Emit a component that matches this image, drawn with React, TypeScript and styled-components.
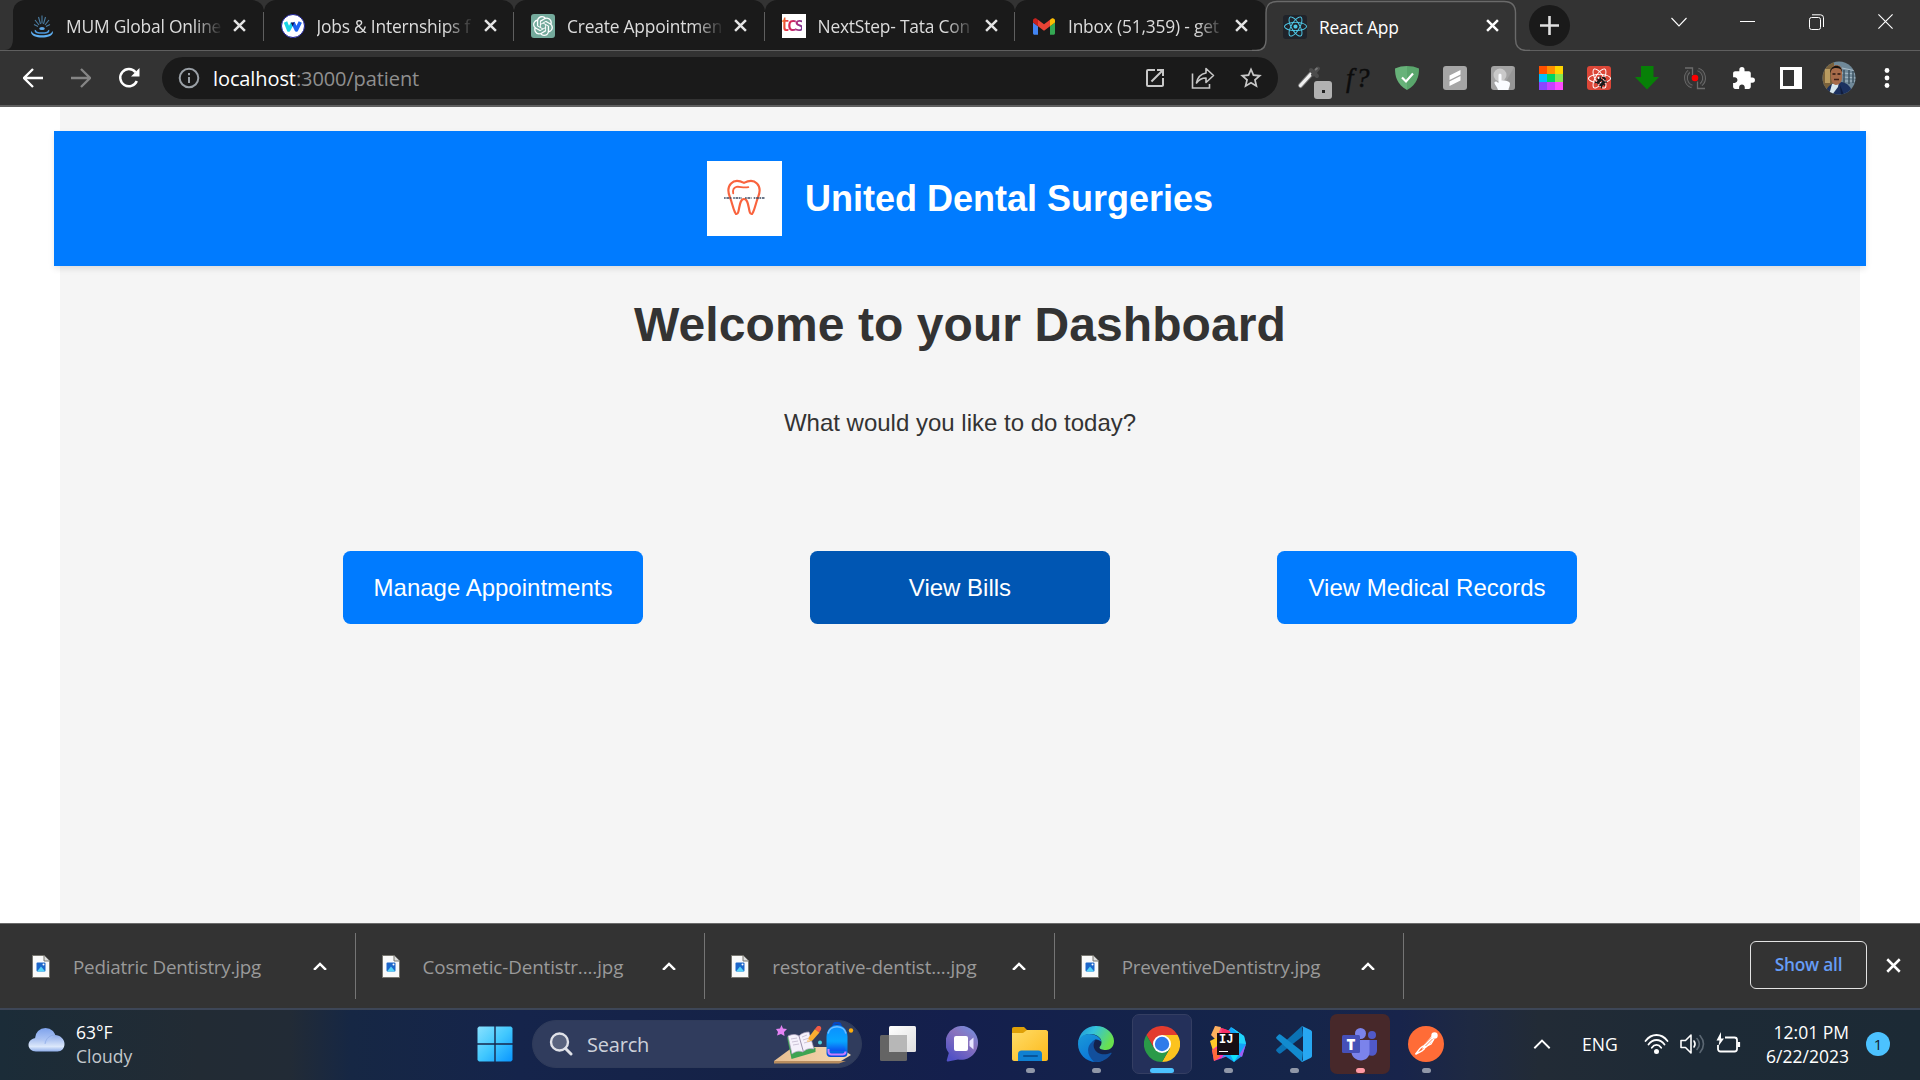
import React from 'react';
import styled, { createGlobalStyle, css } from 'styled-components';
import { SiOpenai } from 'react-icons/si';
import { FaReact, FaBug } from 'react-icons/fa';
import { MdExtension, MdOpenInNew, MdStarBorder } from 'react-icons/md';

const ui = `"Open Sans", "Noto Sans", sans-serif`;
const arial = `"Liberation Sans", Arial, sans-serif`;

const Global = createGlobalStyle`
  * { box-sizing: border-box; }
  html, body { margin: 0; padding: 0; overflow: hidden; }
  body { font-family: ${ui}; background: #fff; }
  svg { display: block; flex: none; }
  button { font: inherit; border: 0; background: none; padding: 0; margin: 0; color: inherit; }
`;

const Screen = styled.div`
  width: 1920px;
  height: 1080px;
  display: flex;
  flex-direction: column;
  overflow: hidden;
`;

/* ---------- Tab strip ---------- */
const TabStrip = styled.header`
  display: flex;
  height: 51px;
  background: #333;
  flex: none;
`;
const TabGroup = styled.div`
  display: flex;
  width: 1266px;
  padding-left: 13px;
  border-bottom: 1px solid #5f5f5f;
  position: relative;
`;
const tabLayout = css`
  display: flex;
  align-items: center;
  flex: none;
`;
const Tab = styled.div`
  ${tabLayout}
  position: relative;
  width: 250.5px;
  height: 50px;
  padding-left: 17px;
  background: #1a1a1a;
  border-radius: 12px 12px 0 0;
  color: #dcdcdc;
  &:not(:last-child)::after {
    content: '';
    position: absolute;
    right: 0;
    top: 12px;
    width: 1px;
    height: 29px;
    background: #5f5f5f;
  }
  &:not(:last-child)::before {
    content: '';
    position: absolute;
    right: -6px;
    bottom: 0;
    width: 12px;
    height: 38px;
    background: #1a1a1a;
  }
`;
const TabFoot = styled.svg`
  position: absolute;
  left: 1px;
  bottom: 0;
`;
const ActiveTab = styled.div`
  ${tabLayout}
  position: relative;
  width: 250px;
  height: 51px;
  color: #fff;
  padding-left: 17px;
  > * { position: relative; }
`;
const ActiveOutline = styled.svg`
  && { position: absolute; left: -14px; top: 0; }
`;
const TabIcon = styled.span`
  width: 24px;
  height: 24px;
  display: flex;
  align-items: center;
  justify-content: center;
  margin-top: 2px;
`;
const TabTitle = styled.span<{ $fade?: boolean }>`
  width: 155px;
  margin: 2px 12px 0 12px;
  font-size: 17.4px;
  line-height: 26px;
  letter-spacing: -0.2px;
  white-space: nowrap;
  ${p => p.$fade && css`mask-image: linear-gradient(90deg, #000 128px, transparent 157px);`}
`;
const StripRest = styled.div`
  flex: 1;
  display: flex;
  justify-content: space-between;
  border-bottom: 1px solid #5f5f5f;
  padding-left: 13px;
`;
const NewTab = styled.button`
  width: 41px;
  height: 41px;
  margin-top: 5px;
  border-radius: 50%;
  background: #1a1a1a;
  display: grid;
  place-items: center;
`;
const WindowControls = styled.div`
  display: flex;
`;
const WindowButton = styled.button`
  width: 69px;
  height: 43px;
  display: grid;
  place-items: center;
`;

/* ---------- Toolbar ---------- */
const Toolbar = styled.div`
  height: 56px;
  flex: none;
  display: flex;
  align-items: center;
  padding: 0 9px;
  background: #333;
  border-bottom: 2px solid #5f5f5f;
`;
const IconCell = styled.span`
  position: relative;
  width: 48px;
  height: 42px;
  flex: none;
  display: grid;
  place-items: center;
`;
const Omnibox = styled.div`
  flex: 1;
  height: 42px;
  margin: 0 9px;
  padding: 0 3px;
  border-radius: 21px;
  background: #1a1a1a;
  color: #c8c8c8;
  display: flex;
  align-items: center;
`;
const Address = styled.span`
  flex: 1;
  padding-top: 1px;
  font-size: 20px;
  line-height: 30px;
  letter-spacing: -0.1px;
  color: #8f8f8f;
  b { font-weight: 400; color: #fff; }
`;
const Badge = styled.span`
  position: absolute;
  left: 27px;
  top: 24px;
  width: 18px;
  height: 18px;
  border-radius: 3px;
  background: #b1b1b1;
  display: grid;
  place-items: center;
  &::after { content: ''; width: 3px; height: 3px; background: #222; margin-top: 3px; }
`;
const FontQuestion = styled.span`
  font: italic 27px/30px "Liberation Serif", serif;
  color: #0c0c0c;
  -webkit-text-stroke: 0.4px #0c0c0c;
  letter-spacing: 2.5px;
`;
const Tile = styled.span<{ $bg: string }>`
  position: relative;
  width: 24px;
  height: 24px;
  border-radius: 3px;
  background: ${p => p.$bg};
  display: grid;
  place-items: center;
  overflow: hidden;
`;
const BugMark = styled(FaBug)`
  position: absolute;
  right: 4px;
  bottom: 3px;
  transform: rotate(40deg);
`;
const Swatches = styled.span`
  width: 24px;
  height: 24px;
  display: grid;
  grid-template-columns: repeat(3, 1fr);
`;
const Swatch = styled.i<{ $c: string }>`
  background: ${p => p.$c};
`;

/* ---------- Page ---------- */
const Page = styled.main`
  height: 816px;
  flex: none;
  background: #fff;
  display: flex;
  justify-content: center;
  font-family: ${arial};
  color: #333;
`;
const Container = styled.div`
  width: 1800px;
  background: #f5f5f5;
  display: flex;
  flex-direction: column;
  align-items: center;
  padding-top: 24px;
`;
const Banner = styled.div`
  width: 1812px;
  height: 135px;
  flex: none;
  background: #007bff;
  box-shadow: 0 3px 6px rgba(0, 0, 0, 0.1);
  display: flex;
  align-items: center;
  justify-content: center;
  gap: 23px;
`;
const Logo = styled.div`
  width: 75px;
  height: 75px;
  background: #fff;
  display: grid;
  place-items: center;
`;
const BrandName = styled.h1`
  margin: 0;
  font-size: 36px;
  line-height: 42px;
  font-weight: 700;
  color: #fff;
`;
const Welcome = styled.h2`
  margin: 32px 0 0;
  font-size: 48px;
  line-height: 54px;
  letter-spacing: 0.08px;
  font-weight: 700;
`;
const Prompt = styled.p`
  margin: 57px 0 0;
  font-size: 24px;
  line-height: 28px;
`;
const Actions = styled.div`
  display: flex;
  gap: 167px;
  margin-top: 114px;
`;
const ActionButton = styled.button<{ $hover?: boolean }>`
  width: 300px;
  height: 73px;
  border-radius: 7.5px;
  background: ${p => (p.$hover ? '#0056b3' : '#007bff')};
  color: #fff;
  font-size: 24px;
`;

/* ---------- Downloads ---------- */
const Downloads = styled.div`
  height: 85px;
  flex: none;
  display: flex;
  background: #333;
  border-top: 1px solid #6a6a6a;
  padding: 9px 19px 0 6px;
`;
const DownloadItem = styled.div`
  width: 349.6px;
  height: 66px;
  display: flex;
  align-items: center;
  padding: 0 28px 0 26px;
  border-right: 1px solid #757575;
`;
const FileName = styled.span<{ $ls: number }>`
  flex: 1;
  padding-top: 1px;
  margin-left: 23px;
  font-size: 18.8px;
  line-height: 26px;
  letter-spacing: ${p => p.$ls}px;
  color: #9a9a9a;
  white-space: nowrap;
`;
const Spacer = styled.div`
  flex: 1;
`;
const ShowAll = styled.button`
  width: 117px;
  height: 48px;
  margin: 8px 19px 0 0;
  padding-bottom: 2px;
  border: 1px solid #e3e3e3;
  border-radius: 6px;
  color: #669df6;
  font-size: 17.3px;
  font-weight: 600;
  letter-spacing: -0.2px;
`;
const CloseShelf = styled.button`
  height: 48px;
  margin-top: 8px;
`;

/* ---------- Taskbar ---------- */
const Taskbar = styled.footer`
  height: 72px;
  flex: none;
  display: flex;
  align-items: center;
  padding-bottom: 2px;
  border-top: 2px solid #3d4657;
  background: linear-gradient(90deg, #1b2c38 0, #222b34 200px, #222b36 290px, #162744 350px, #15244b 520px, #152247 740px, #141f4d 960px, #14234a 1150px, #15254a 1300px, #18244b 1400px, #1e2942 1470px, #222b36 1540px, #1d2a36 1700px, #1c2a35 1920px);
  color: #fff;
`;
const Weather = styled.div`
  width: 462px;
  flex: none;
  padding-left: 28px;
  display: flex;
  gap: 11px;
  align-items: center;
`;
const Lines = styled.div<{ $right?: boolean }>`
  display: flex;
  flex-direction: column;
  font-size: 17.5px;
  line-height: 24px;
  text-align: ${p => (p.$right ? 'right' : 'left')};
`;
const Muted = styled.span`
  color: #c3c8cc;
`;
const TaskCell = styled.span<{ $bg?: string; $edge?: string }>`
  position: relative;
  width: 60px;
  height: 60px;
  margin: 0 3px;
  flex: none;
  display: grid;
  place-items: center;
  border-radius: 7px;
  border: 1px solid ${p => p.$edge ?? 'transparent'};
  background: ${p => p.$bg ?? 'transparent'};
`;
const Running = styled.i<{ $color?: string; $wide?: boolean }>`
  position: absolute;
  left: 50%;
  bottom: 0;
  width: ${p => (p.$wide ? 24 : 9)}px;
  height: 5px;
  margin-left: ${p => (p.$wide ? -12 : -4.5)}px;
  border-radius: 3px;
  background: ${p => p.$color ?? '#9097a8'};
`;
const SearchBox = styled.div`
  width: 330px;
  height: 48px;
  margin: 0 3px 0 4px;
  flex: none;
  border-radius: 24px;
  border: 1px solid #2f3b5a;
  background: #303c5d;
  display: flex;
  align-items: center;
  padding: 0 7px 0 16px;
`;
const SearchLabel = styled.span`
  flex: 1;
  margin-left: 14px;
  font-size: 20px;
  letter-spacing: -0.2px;
  color: #cdd1da;
`;
const Tray = styled.div`
  margin-left: auto;
  padding-right: 30px;
  display: flex;
  align-items: center;
`;
const Language = styled.span`
  width: 62px;
  margin-left: 31px;
  font-size: 17.5px;
`;
const TrayIcons = styled.div`
  display: flex;
  align-items: center;
  gap: 11px;
  width: 119px;
`;
const Clock = styled.div`
  width: 86px;
  margin-right: 17px;
  white-space: nowrap;
  display: flex;
  justify-content: flex-end;
`;
const Count = styled.span`
  width: 24px;
  height: 24px;
  border-radius: 50%;
  background: #4cc2ff;
  color: #12202e;
  font-size: 15px;
  line-height: 24px;
  text-align: center;
`;

const Cross = ({ size = 13, color = '#e4e4e4', w = 2.3 }: { size?: number; color?: string; w?: number }) => (
  <svg width={size} height={size} viewBox="0 0 12 12">
    <path d="M1 1L11 11M11 1L1 11" stroke={color} strokeWidth={w} />
  </svg>
);

const Fountain = () => (
  <svg width="24" height="26" viewBox="0 0 24 26" fill="none">
    <g stroke="#4b7ea3" strokeWidth="1.1">
      <path d="M12 2.500v8M8.500 4l2 7M15.500 4l-2 7M5 7l4 5M19 7l-4 5M4 11.500l4 2M20 11.500l-4 2" />
    </g>
    <ellipse cx="12" cy="15.500" rx="2.800" ry="1.500" fill="#5fa8e6" />
    <path d="M5.500 17c-1 2.500 3 3 6.500 3s7.500-.500 6.500-3" stroke="#4d9be0" strokeWidth="1.500" />
    <path d="M1.500 18c-2 4 4 6.500 10.500 6.500S24.500 22 22.500 18c-1 3-5 4.200-10.500 4.200S2.500 21 1.500 18z" fill="#5fb0f2" />
  </svg>
);

const BlueW = () => (
  <svg width="24" height="24" viewBox="0 0 24 24">
    <circle cx="12" cy="12" r="11.500" fill="#fff" stroke="#1b1f9c" />
    <path d="M4.500 8l3.200 8 3.800-7" fill="none" stroke="#19d3e6" strokeWidth="3.600" strokeLinejoin="round" />
    <path d="M12 8.500l3.400 7.500L19.300 8" fill="none" stroke="#1a62f0" strokeWidth="3.600" strokeLinejoin="round" />
    <path d="M9.800 8.500h3.500l-1.600 4z" fill="#10145a" />
  </svg>
);

const OpenAiTile = styled.span`
  width: 24px;
  height: 24px;
  border-radius: 3px;
  background: #74aa9c;
  color: #fff;
  display: grid;
  place-items: center;
`;
const TcsTile = styled.span`
  width: 24px;
  height: 24px;
  background: #fff;
  font: 600 19px/21px "Open Sans", sans-serif;
  letter-spacing: -1.8px;
  span {
    background: linear-gradient(100deg, #f58220 5%, #e4274b 35%, #b62a78 65%, #6a3a98);
    background-clip: text;
    -webkit-background-clip: text;
    color: transparent;
  }
`;

const Gmail = () => (
  <svg width="22" height="17" viewBox="52 42 88 66">
    <path fill="#4285f4" d="M58 108h14V74L52 59v43c0 3.320 2.690 6 6 6" />
    <path fill="#34a853" d="M120 108h14c3.320 0 6-2.690 6-6V59l-20 15" />
    <path fill="#fbbc04" d="M120 48v26l20-15v-8c0-7.420-8.470-11.650-14.400-7.200" />
    <path fill="#ea4335" d="M72 74V48l24 18 24-18v26L96 92" />
    <path fill="#c5221f" d="M52 51v8l20 15V48l-5.600-4.200c-5.940-4.450-14.400-.220-14.400 7.200" />
  </svg>
);

const tabs = [
  { title: 'MUM Global Online', icon: <Fountain /> },
  { title: 'Jobs & Internships f', icon: <BlueW /> },
  { title: 'Create Appointmen', icon: <OpenAiTile><SiOpenai size={20} /></OpenAiTile> },
  { title: 'NextStep- Tata Con', icon: <TcsTile><span>tcs</span></TcsTile> },
  { title: 'Inbox (51,359) - get', icon: <Gmail /> },
];

const Tooth = () => (
  <svg width="46" height="41" viewBox="2 0 42 38" fill="none">
    <g stroke="#f9633e" strokeWidth="2" strokeLinejoin="round" strokeLinecap="round">
      <path d="M23 4.500c-5-2.500-9-2.500-12 .500-3 3-3 8-1 13 2 5 2.500 9 4.500 13.500 1 2.500 2.500 2.500 3.200 0C19 27 19 19.500 23 19.500s4 7.500 5.300 12c.7 2.500 2.200 2.500 3.200 0 2-4.500 2.500-8.500 4.500-13.500 2-5 2-10-1-13-3-3-7-3-12-.500z" />
      <path d="M27 8.500c-5 1-8-1-11-.300-2.500.600-3.500 3-3 6" strokeWidth="1.700" />
    </g>
    <path d="M4.500 18.500h7M13 18.500h8M24 18.500h6M32 18.500h10" stroke="#3a4a63" strokeWidth="1.300" strokeDasharray="1.500 .7 2.500 .6" />
  </svg>
);

const ReactTile = () => (
  <Tile $bg="#20232a"><FaReact size={23} color="#4fc9e8" /></Tile>
);

const Eyedropper = () => (
  <svg width="30" height="26" viewBox="0 0 30 26">
    <path d="M4.500 20.500L15 9" stroke="#777" strokeWidth="5" strokeLinecap="round" />
    <path d="M4.500 20.500L15 9" stroke="#f0f0f0" strokeWidth="3.200" strokeLinecap="round" />
    <path d="M15 5l6 6M17 9.500l5-6" stroke="#4c4c4c" strokeWidth="4" strokeLinecap="round" />
    <path d="M19 5l2.500-2" stroke="#777" strokeWidth="2" />
  </svg>
);
const Shield = () => (
  <svg width="24" height="24" viewBox="0 0 24 24">
    <path d="M12 0C8 0 3.500.800 0 2.500 0 10 1.500 18 12 24z" fill="#67b279" />
    <path d="M12 0c4 0 8.500.800 12 2.500C24 10 22.500 18 12 24z" fill="#5aa66c" />
    <path d="M7 11.500l4 4 7-8" fill="none" stroke="#fff" strokeWidth="2.200" />
  </svg>
);
const Scribe = () => (
  <svg width="24" height="24" viewBox="0 0 24 24">
    <path d="M6.500 9.500l11-5.500v4.500l-11 5.500zM6.500 15.500l11-5.500v4.500l-11 5.500z" fill="#fff" />
  </svg>
);
const Touch = () => (
  <svg width="24" height="24" viewBox="0 0 24 24">
    <path d="M24 0v24H10z" fill="#8a8a8a" opacity=".5" />
    <circle cx="9" cy="9" r="6.500" fill="#c9c9c9" />
    <path d="M7.500 9c0-1.800 3-1.800 3 0v5.500c3 0 8.500.500 8.500 3 0 3-1.500 4.500-1.500 6.500H7C6.500 21 3 18.500 3.500 16c1-1 2.500-.500 4 1z" fill="#fafcff" />
  </svg>
);
const DownArrow = () => (
  <svg width="24" height="24" viewBox="0 0 24 24">
    <path d="M6 0h12.500v11H24L12 23.500 0 11h6z" fill="#078007" />
  </svg>
);
const Cycle = () => (
  <svg width="24" height="24" viewBox="0 0 24 24" fill="none">
    <g stroke="#6c6c6c" strokeWidth="3.800">
      <path d="M9 20.500A9 9 0 0 1 6 5.300" />
      <path d="M15 3.500a9 9 0 0 1 3 15.200" />
    </g>
    <g stroke="#3b3b3b" strokeWidth="2">
      <path d="M9 20.500A9 9 0 0 1 6 5.300" />
      <path d="M15 3.500a9 9 0 0 1 3 15.200" />
    </g>
    <path d="M2 2h7.500v7M22 22.500h-7.500v-7" stroke="#6c6c6c" strokeWidth="1.300" />
    <circle cx="12" cy="12" r="3.300" fill="#f00" />
  </svg>
);
const SidePanel = () => (
  <svg width="22" height="22" viewBox="0 0 22 22">
    <path fillRule="evenodd" d="M0 0h22v22H0zM3 3v16h11V3z" fill="#fff" />
  </svg>
);
const Avatar = () => (
  <svg width="34" height="34" viewBox="0 0 34 34">
    <defs><clipPath id="face"><circle cx="17" cy="17" r="16.500" /></clipPath></defs>
    <g clipPath="url(#face)">
      <path d="M0 0h34v34H0z" fill="#708999" />
      <path d="M0 0h12v34H0z" fill="#79613b" />
      <path d="M3 8h5v14H3z" fill="#b99b60" />
      <path d="M20 7l14 3M20 12l14 1M21 16l13 1M23 20h11" stroke="#a9bcc8" strokeWidth="1.200" />
      <path d="M22 9v13M27 9v14M31 10v12" stroke="#3d5260" strokeWidth="1.500" />
      <path d="M3 34c1-8 5-10 9-12l8-1c6 2 9 4 11 13z" fill="#1c315f" />
      <path d="M10 23l7-2-1 5-6 8H7z" fill="#d7e7ee" />
      <path d="M18 24l1 10h3z" fill="#101d3e" />
      <path d="M9 10c0-8 11-8 11 0v7c0 4-3 7-6 7s-5-4-5-8z" fill="#a66b4a" />
      <path d="M8 12c0-9 12-10 12-1l-1.500-3C16 6.500 12 6.500 10 8z" fill="#17130f" />
      <path d="M10.500 13h3M15.500 13h3" stroke="#2a1710" strokeWidth="1.300" />
      <path d="M12 18.500h5" stroke="#3e2018" strokeWidth="1.500" />
    </g>
  </svg>
);
const Dots = () => (
  <svg width="6" height="26" viewBox="0 0 6 26" fill="#fff">
    <circle cx="3" cy="5.500" r="2.400" /><circle cx="3" cy="13" r="2.400" /><circle cx="3" cy="20.500" r="2.400" />
  </svg>
);
const Arrow = ({ flip, color }: { flip?: boolean; color: string }) => (
  <svg width="20" height="20" viewBox="0 0 20 20" fill="none" stroke={color} strokeWidth="2.300">
    <path d={flip ? 'M0 10h18M10 1l9 9-9 9' : 'M20 10H2M10 1l-9 9 9 9'} />
  </svg>
);
const Reload = () => (
  <svg width="22" height="22" viewBox="0 0 22 22">
    <path d="M18.800 14A8.600 8.600 0 1 1 17.500 5.200" fill="none" stroke="#fff" strokeWidth="2.500" />
    <path d="M21.500 1v8.500H13z" fill="#fff" />
  </svg>
);
const Info = () => (
  <svg width="22" height="22" viewBox="0 0 22 22" fill="none" stroke="#9aa0a6" strokeWidth="2">
    <circle cx="11" cy="11" r="9.300" /><path d="M11 10v6M11 6v2.200" />
  </svg>
);
const Share = () => (
  <svg width="24" height="24" viewBox="0 0 24 24" fill="none" stroke="#c8c8c8" strokeWidth="1.600">
    <path d="M1.500 7.500V22h17v-4" />
    <path d="M15 7V2.500l7.500 7-7.500 7V12c-4 0-7 1.500-9.500 5C6.500 11.500 9.500 8 15 7z" strokeLinejoin="round" />
  </svg>
);
const FileIcon = () => (
  <svg width="18" height="23" viewBox="0 0 18 23">
    <path d="M.500.500h11.500L17.500 6v16.500H.500z" fill="#fafafa" stroke="#77766f" />
    <path d="M12 .500V6h5.500" fill="#ddd" stroke="#77766f" />
    <rect x="4.500" y="7.500" width="9" height="9" rx="1" fill="#1c66c9" />
    <path d="M5 16.500l4-5 4.300 5z" fill="#55d3f7" />
    <circle cx="11.500" cy="9.500" r="1" fill="#fff" />
  </svg>
);
const ChevronUp = ({ w = 14, sw = 2.4 }: { w?: number; sw?: number }) => (
  <svg width={w} height={w * 0.64} viewBox="0 0 14 9" fill="none" stroke="#fff" strokeWidth={sw}>
    <path d="M1 8l6-6 6 6" />
  </svg>
);

const Cloud = () => (
  <svg width="37" height="32" viewBox="0 0 37 32">
    <defs>
      <linearGradient id="cl" x2="0" y2="1"><stop stopColor="#7ea2ec" /><stop offset="1" stopColor="#d3e1fa" /></linearGradient>
      <linearGradient id="cl2" x2="0" y2="1"><stop stopColor="#8facea" /><stop offset=".7" stopColor="#dce8fb" /><stop offset="1" stopColor="#8faeea" /></linearGradient>
    </defs>
    <circle cx="17.500" cy="10.500" r="10.500" fill="url(#cl)" />
    <path d="M8 10c5-1 8 3 9 6l10-9c5 0 9.500 4 9.500 9 0 4.500-3 7.500-7 7.500H8C3.500 23.500.500 20.500.500 17S3.500 10.300 8 10z" fill="url(#cl2)" />
    <path d="M17 16c1-6 5-9 10-9" fill="none" stroke="#86a4e3" opacity=".6" />
  </svg>
);
const Windows = () => (
  <svg width="36" height="36" viewBox="0 0 36 36">
    <defs><linearGradient id="win" x2="36" y2="36" gradientUnits="userSpaceOnUse"><stop stopColor="#8be2ff" /><stop offset=".5" stopColor="#42c8fe" /><stop offset="1" stopColor="#0794ff" /></linearGradient></defs>
    <path d="M2 .5h15.300v16.800H.5V2zM18.700.5H34L35.500 2v15.300H18.700zM.5 18.700h16.800v16.800H2L.5 34zM18.700 18.700h16.800V34L34 35.500H18.700z" fill="url(#win)" />
  </svg>
);
const Magnifier = () => (
  <svg width="24" height="24" viewBox="0 0 24 24" fill="none" stroke="#e0e2e8" strokeWidth="2.400" strokeLinecap="round">
    <circle cx="10.500" cy="10" r="8.500" fill="#59637e" /><path d="M16.500 16.500l5.500 5.500" strokeWidth="3" />
  </svg>
);
const StudyScene = () => (
  <svg width="80" height="44" viewBox="0 0 80 44">
    <defs>
      <linearGradient id="desk" x2="1"><stop stopColor="#e8bf92" /><stop offset="1" stopColor="#f3d9b2" /></linearGradient>
      <linearGradient id="bag" x2="0" y2="1"><stop stopColor="#0b8dff" /><stop offset=".5" stopColor="#08a5ff" /><stop offset="1" stopColor="#0348d8" /></linearGradient>
      <linearGradient id="pocket" x2="0" y2="1"><stop stopColor="#0aa0ff" /><stop offset="1" stopColor="#0a52ee" /></linearGradient>
    </defs>
    <path d="M0 39l19-14h46l12 8-10 6z" fill="url(#desk)" /><path d="M0 39h72l-7 2.500H0z" fill="#b88d5f" />
    <path d="M7.500 3l1.500 3.500 4 .500-3 3 .500 4-3.500-2-4 1.500 1-3.500L2 7l4-.500z" fill="#e583f4" />
    <path d="M13 15l4.500 22 24-7v-4z" fill="#3da452" />
    <path d="M14 14c4-2 8-2 11 0 3-3 6-4 10-4l5 17c-5-1-8 0-11 3-4-1.500-7-1-11 2z" fill="#f5f1fb" stroke="#aaa0bb" strokeWidth=".7" />
    <path d="M25 14l4.500 16" stroke="#9a90ac" /><path d="M17 17l6-1M18 20l6-1M19 23l6-1M28 15l5-2M29 18l6-2M30 21l7-2" stroke="#c0b6cc" strokeWidth=".8" />
    <path d="M33 20l2-5 6-8 4.500 3.500-7 8z" fill="#fbad31" /><path d="M41 7l2-2.500c3-1.500 5.500 1 3.500 4l-1.500 2z" fill="#f25b45" /><path d="M33 20l1-3.500 2.500 2z" fill="#f8d8ad" />
    <circle cx="46" cy="20.500" r="2" fill="#4ed3df" />
    <path d="M59.500 4c0-4 7-4 7 0" fill="none" stroke="#0647c1" strokeWidth="2.500" />
    <path d="M52.500 15c0-16 21-16 21 0v16c0 3-2 4-4 4h-13c-3 0-4-2-4-4z" fill="url(#bag)" />
    <path d="M54 11.500c2-9 16-9 18 0" fill="none" stroke="#72bdff" strokeWidth="1.500" />
    <path d="M54.500 29c0-12 17-12 17 0z" fill="url(#pocket)" /><path d="M54.500 27v2.500c0 2 1 3 3 3h11c2 0 3-1 3-3" fill="none" stroke="#c57dff" strokeWidth="2" />
    <circle cx="77" cy="8.500" r="2.200" fill="#ffae0b" />
  </svg>
);
const TaskView = () => (
  <svg width="36" height="36" viewBox="0 0 36 36">
    <defs><linearGradient id="tv" x2="1" y2="1"><stop stopColor="#fff" /><stop offset="1" stopColor="#dedede" /></linearGradient></defs>
    <rect y="9" width="27" height="26" rx="1.500" fill="#646464" />
    <rect x="9" width="27" height="26" rx="1.500" fill="url(#tv)" />
    <path d="M9 9h18v17H10.500L9 24.500z" fill="#b7b7b7" />
  </svg>
);
const Chat = () => (
  <svg width="36" height="36" viewBox="0 0 36 36">
    <defs><linearGradient id="ch" x1="1" x2=".3" y2="1"><stop stopColor="#6f93e6" /><stop offset=".45" stopColor="#8a73bd" /><stop offset="1" stopColor="#5151c6" /></linearGradient></defs>
    <path d="M18 0a17 17 0 1 1-6 33.500L2 35.500c-1 0-1.400-.500-1.200-1.400l2-7A17 17 0 0 1 18 0z" fill="url(#ch)" />
    <rect x="8" y="10" width="14" height="15" rx="2" fill="#fff" /><path d="M23.500 15l4-3.500v12l-4-3.500z" fill="#e8e6ff" />
  </svg>
);
const Folder = () => (
  <svg width="36" height="34" viewBox="0 0 36 34">
    <defs><linearGradient id="fo" x2="1" y2="1"><stop stopColor="#ffdc67" /><stop offset="1" stopColor="#fcb91b" /></linearGradient></defs>
    <path d="M0 2C0 .8.800 0 2 0h10l4 4h18c1 0 2 1 2 2v10H0z" fill="#dfa007" />
    <path d="M0 6h11l4-3h19c1 0 2 1 2 2v27c0 1-1 2-2 2H2c-1 0-2-1-2-2z" fill="url(#fo)" />
    <path d="M6 34v-7c0-2 1.500-3.500 3.500-3.500h17c2 0 3.500 1.500 3.500 3.500v7z" fill="#0f80d2" /><path d="M12 29h13" stroke="#07559a" strokeWidth="2" strokeLinecap="round" />
  </svg>
);
const Edge = () => (
  <svg width="36" height="36" viewBox="0 0 36 36">
    <defs>
      <linearGradient id="e1" x2="1" y2=".4"><stop stopColor="#1b91d8" /><stop offset=".45" stopColor="#34c2dc" /><stop offset="1" stopColor="#69e04e" /></linearGradient>
      <linearGradient id="e2" x2=".6" y2="1"><stop stopColor="#1a9ad9" /><stop offset="1" stopColor="#0a72d6" /></linearGradient>
    </defs>
    <path d="M0 17C1 7 8 0 18 0c11 0 18 8 18 15 0 6-4 9-8 9-4 0-6.500-1-6.500-2.500 0-1 2-2 2-5C23.500 11 18 8 12 8 6 8 2 12 0 17z" fill="url(#e1)" />
    <path d="M0 18C0 12 5 8 11 8c7 0 12 4 12.500 8-2-2-5-3-7-2-4 3-5 9-2 14 3 4 7 6 11 6-2 1.500-5 2-7.500 2C8 36 0 28 0 18z" fill="url(#e2)" />
    <path d="M14 16c-6 5-5 14 2 19.800C24 37 31 32 33.500 27.500c.3-.7-.2-1-.800-.700C26 30 19 28 16.500 23c-1.500-3-1-6 1-9-1.500.300-2.500 1-3.500 2z" fill="#124f9c" />
  </svg>
);
const Chrome = () => (
  <svg width="36" height="36" viewBox="0 0 36 36">
    <path d="M18 18V9h15.600A18 18 0 0 1 18 36l7.800-13.500z" fill="#fcc31e" />
    <path d="M18 9h15.600a18 18 0 0 0-31.200 0l7.800 13.500z" fill="#e33b2e" />
    <path d="M2.400 9A18 18 0 0 0 18 36l7.800-13.500H10.200z" fill="#2a9a48" />
    <circle cx="18" cy="18" r="9" fill="#fff" /><circle cx="18" cy="18" r="7.200" fill="#2f7bea" />
  </svg>
);
const IdeaBox = styled.span`
  position: relative;
  width: 36px;
  height: 36px;
`;
const IdeaMark = styled.span`
  position: absolute;
  left: 7px;
  top: 7px;
  width: 22px;
  height: 22px;
  background: #160d14;
  color: #fff;
  font: 700 12px/14px "Liberation Mono", monospace;
  padding-left: 2px;
  &::after { content: ''; position: absolute; left: 2px; bottom: 3px; width: 9px; height: 1.5px; background: #fff; }
`;
const Idea = () => (
  <IdeaBox>
    <svg width="36" height="36" viewBox="0 0 36 36">
      <path d="M5 0l15 5-2 13L6 14z" fill="#ff4a81" /><path d="M5 0l6 1-5 13-5-5z" fill="#fdb05e" />
      <path d="M0 15l8-4v12l-5 2z" fill="#ffc928" /><path d="M2 24l8-6 8 12-14 5z" fill="#fb2fbd" /><path d="M2 24l5-2 3 9-6 4z" fill="#ff6a3a" />
      <path d="M18 5l3-4 13 9 2 8-4 12-8 6-9-6-4 3 10-15z" fill="#12a4f7" /><path d="M21 1l7 7-2 9 10 1-2-8z" fill="#20d4fa" /><path d="M36 18l-7 11 3 2z" fill="#a05cf7" /><path d="M24 36l-4-8h9z" fill="#11e0fb" />
      <path d="M12 2l8 3 1 6-10-1z" fill="#f92d63" />
    </svg>
    <IdeaMark>IJ</IdeaMark>
  </IdeaBox>
);
const Code = () => (
  <svg width="36" height="36" viewBox="0 0 36 36">
    <path d="M26 0L.800 23c-1 1-1 1.500 0 2.500l1.800 1.700c.8.700 1.400.600 2.200 0L27 10z" fill="#0b72b5" />
    <path d="M26 36L.800 13c-1-1-1-1.500 0-2.500l1.800-1.700c.8-.7 1.400-.6 2.200 0L27 26z" fill="#128bcf" />
    <path d="M26 0l8.500 4c1 .5 1.500 1.200 1.500 2.200v23.600c0 1-.5 1.700-1.500 2.200L26 36c-.6 0-.5-.5 1-2V2z" fill="#27a7f2" />
  </svg>
);
const TeamsBox = styled.span`
  position: relative;
`;
const TeamsLetter = styled.span`
  position: absolute;
  left: 0;
  top: 7px;
  width: 18px;
  font-size: 15px;
  line-height: 18px;
  font-weight: 800;
  text-align: center;
  color: #fff;
`;
const Teams = () => (
  <TeamsBox>
    <svg width="36" height="33" viewBox="0 0 36 33">
      <circle cx="18.500" cy="5.500" r="5.500" fill="#7b83eb" /><circle cx="30" cy="7" r="4" fill="#5059c9" />
      <path d="M23 12h12v10c0 8-10 7-12 1z" fill="#5059c9" />
      <path d="M9 12h18.500v12c0 11-16 11-18 1z" fill="#7b83eb" />
      <rect y="7" width="18" height="18" rx="1.500" fill="#4650b8" />
    </svg>
    <TeamsLetter>T</TeamsLetter>
  </TeamsBox>
);
const Postman = () => (
  <svg width="36" height="36" viewBox="0 0 36 36">
    <circle cx="18" cy="18" r="18" fill="#ff6c37" />
    <circle cx="26.500" cy="9.500" r="3.200" fill="#fff" />
    <path d="M23.500 10l2.500 3.500-8 8.500-4 .800 1.500-3.600z" fill="#fff" />
    <path d="M15 20l-3 2.500-4.500 5.800 6.500-3.500 3-2.600M18.500 20l4.500-2 3-5" fill="none" stroke="#fff" strokeWidth="1.400" />
    <path d="M16 18.500l7-7M17.500 20l7-7" stroke="#ff6c37" strokeWidth=".8" />
  </svg>
);
const Wifi = () => (
  <svg width="25" height="22" viewBox="0 0 25 22" fill="none" stroke="#fff" strokeWidth="1.800" strokeLinecap="round">
    <path d="M1.500 8c6-8 16-8 22 0M4.500 11.500c4.500-6 11.500-6 16 0M7.800 14.800c2.700-3.800 6.700-3.800 9.400 0" /><circle cx="12.500" cy="18.500" r="1.600" fill="#fff" />
  </svg>
);
const Volume = () => (
  <svg width="25" height="24" viewBox="0 0 25 24" fill="none" stroke="#fff" strokeWidth="1.600" strokeLinejoin="round" strokeLinecap="round">
    <path d="M1 8.500h4.500L11 3v18l-5.500-5.500H1z" /><path d="M14 9c1.400 2 1.400 4 0 6" />
    <path d="M17 6.500c3 3.500 3 7.500 0 11M20 3.500c4.500 5.500 4.500 11.500 0 17" stroke="#5b6772" />
  </svg>
);
const Battery = () => (
  <svg width="25" height="24" viewBox="0 0 25 24" fill="none" stroke="#fff" strokeWidth="1.800">
    <path d="M9 5.500h9.500c1.500 0 2.500 1 2.500 2.500v9c0 1.500-1 2.500-2.500 2.500h-14C3 19.500 2 18.500 2 17v-4" /><path d="M22.800 10v5" strokeWidth="2.600" />
    <path d="M5 0L.5 8.500h3L2.500 14 8 6.500H5z" fill="#fff" stroke="none" />
  </svg>
);

const swatches = ['#ff5000', '#ff9000', '#ffd500', '#00bfff', '#00d563', '#86e851', '#8a45ff', '#c840ff', '#ff4bff'];
const downloads = [
  { name: 'Pediatric Dentistry.jpg', ls: -0.2 },
  { name: 'Cosmetic-Dentistr....jpg', ls: -0.1 },
  { name: 'restorative-dentist....jpg', ls: -0.12 },
  { name: 'PreventiveDentistry.jpg', ls: -0.22 },
];

export default function App() {
  return (
    <Screen>
      <Global />
      <TabStrip>
        <TabGroup>
          <TabFoot width="12" height="12" viewBox="0 0 12 12"><path d="M12 0v12H4Q12 12 12 0z" fill="#1a1a1a" /></TabFoot>
          {tabs.map(t => (
            <Tab key={t.title}>
              <TabIcon>{t.icon}</TabIcon>
              <TabTitle $fade>{t.title}</TabTitle>
              <Cross />
            </Tab>
          ))}
        </TabGroup>
        <ActiveTab>
          <ActiveOutline width="278" height="51" viewBox="0 0 278 51">
            <path d="M0 50.500H4Q14 50.500 14 40V13Q14 1.500 25 1.500H252Q263.500 1.500 263.500 13V39Q263.500 50.500 275 50.500H278V51H0z" fill="#333" />
            <path d="M0 50.500H4Q14 50.500 14 40V13Q14 1.500 25 1.500H252Q263.500 1.500 263.500 13V39Q263.500 50.500 275 50.500H278" fill="none" stroke="#6a6a6a" strokeWidth="1.400" />
          </ActiveOutline>
          <TabIcon><ReactTile /></TabIcon>
          <TabTitle>React App</TabTitle>
          <Cross color="#fff" />
        </ActiveTab>
        <StripRest>
          <NewTab><svg width="19" height="19" viewBox="0 0 19 19"><path d="M9.500 0v19M0 9.500h19" stroke="#e0e0e0" strokeWidth="2.600" /></svg></NewTab>
          <WindowControls>
            <WindowButton><svg width="16" height="10" viewBox="0 0 16 10"><path d="M.5 1L8 9l7.500-8" fill="none" stroke="#fff" strokeWidth="1.100" /></svg></WindowButton>
            <WindowButton><svg width="15" height="2"><path d="M0 .5h15" stroke="#fff" /></svg></WindowButton>
            <WindowButton><svg width="15" height="16" viewBox="0 0 15 16" fill="none" stroke="#fff"><rect x=".5" y="3.500" width="11" height="12" rx="2" /><path d="M3 .8h8.500a3 3 0 0 1 3 3V13" /></svg></WindowButton>
            <WindowButton><Cross size={17} color="#fff" w={0.8} /></WindowButton>
          </WindowControls>
        </StripRest>
      </TabStrip>

      <Toolbar>
        <IconCell><Arrow color="#fff" /></IconCell>
        <IconCell><Arrow flip color="#858585" /></IconCell>
        <IconCell><Reload /></IconCell>
        <Omnibox>
          <IconCell><Info /></IconCell>
          <Address><b>localhost</b>:3000/patient</Address>
          <IconCell><MdOpenInNew size={24} /></IconCell>
          <IconCell><Share /></IconCell>
          <IconCell><MdStarBorder size={26} /></IconCell>
        </Omnibox>
        <IconCell><Eyedropper /><Badge /></IconCell>
        <IconCell><FontQuestion>f?</FontQuestion></IconCell>
        <IconCell><Shield /></IconCell>
        <IconCell><Tile $bg="#a6a6a6"><Scribe /></Tile></IconCell>
        <IconCell><Tile $bg="#a3a3a3"><Touch /></Tile></IconCell>
        <IconCell><Swatches>{swatches.map(c => <Swatch key={c} $c={c} />)}</Swatches></IconCell>
        <IconCell><Tile $bg="#dc4637"><FaReact size={23} color="#fff" /><BugMark size={11} color="#1a1a1a" /></Tile></IconCell>
        <IconCell><DownArrow /></IconCell>
        <IconCell><Cycle /></IconCell>
        <IconCell><MdExtension size={25} color="#fff" /></IconCell>
        <IconCell><SidePanel /></IconCell>
        <IconCell><Avatar /></IconCell>
        <IconCell><Dots /></IconCell>
      </Toolbar>

      <Page>
        <Container>
          <Banner>
            <Logo><Tooth /></Logo>
            <BrandName>United Dental Surgeries</BrandName>
          </Banner>
          <Welcome>Welcome to your Dashboard</Welcome>
          <Prompt>What would you like to do today?</Prompt>
          <Actions>
            <ActionButton>Manage Appointments</ActionButton>
            <ActionButton $hover>View Bills</ActionButton>
            <ActionButton>View Medical Records</ActionButton>
          </Actions>
        </Container>
      </Page>

      <Downloads>
        {downloads.map(d => (
          <DownloadItem key={d.name}>
            <FileIcon />
            <FileName $ls={d.ls}>{d.name}</FileName>
            <ChevronUp />
          </DownloadItem>
        ))}
        <Spacer />
        <ShowAll>Show all</ShowAll>
        <CloseShelf><Cross size={15} color="#fff" w={2} /></CloseShelf>
      </Downloads>

      <Taskbar>
        <Weather>
          <Cloud />
          <Lines><span>63°F</span><Muted>Cloudy</Muted></Lines>
        </Weather>
        <TaskCell><Windows /></TaskCell>
        <SearchBox>
          <Magnifier />
          <SearchLabel>Search</SearchLabel>
          <StudyScene />
        </SearchBox>
        <TaskCell><TaskView /></TaskCell>
        <TaskCell><Chat /></TaskCell>
        <TaskCell><Folder /><Running /></TaskCell>
        <TaskCell><Edge /><Running /></TaskCell>
        <TaskCell $bg="#24305a" $edge="#343e62"><Chrome /><Running $wide $color="#4cc2ff" /></TaskCell>
        <TaskCell><Idea /><Running /></TaskCell>
        <TaskCell><Code /><Running /></TaskCell>
        <TaskCell $bg="#47282a"><Teams /><Running $color="#ff99a4" /></TaskCell>
        <TaskCell><Postman /><Running /></TaskCell>
        <Tray>
          <ChevronUp w={18} sw={1.5} />
          <Language>ENG</Language>
          <TrayIcons><Wifi /><Volume /><Battery /></TrayIcons>
          <Clock><Lines $right><span>12:01 PM</span><span>6/22/2023</span></Lines></Clock>
          <Count>1</Count>
        </Tray>
      </Taskbar>
    </Screen>
  );
}
